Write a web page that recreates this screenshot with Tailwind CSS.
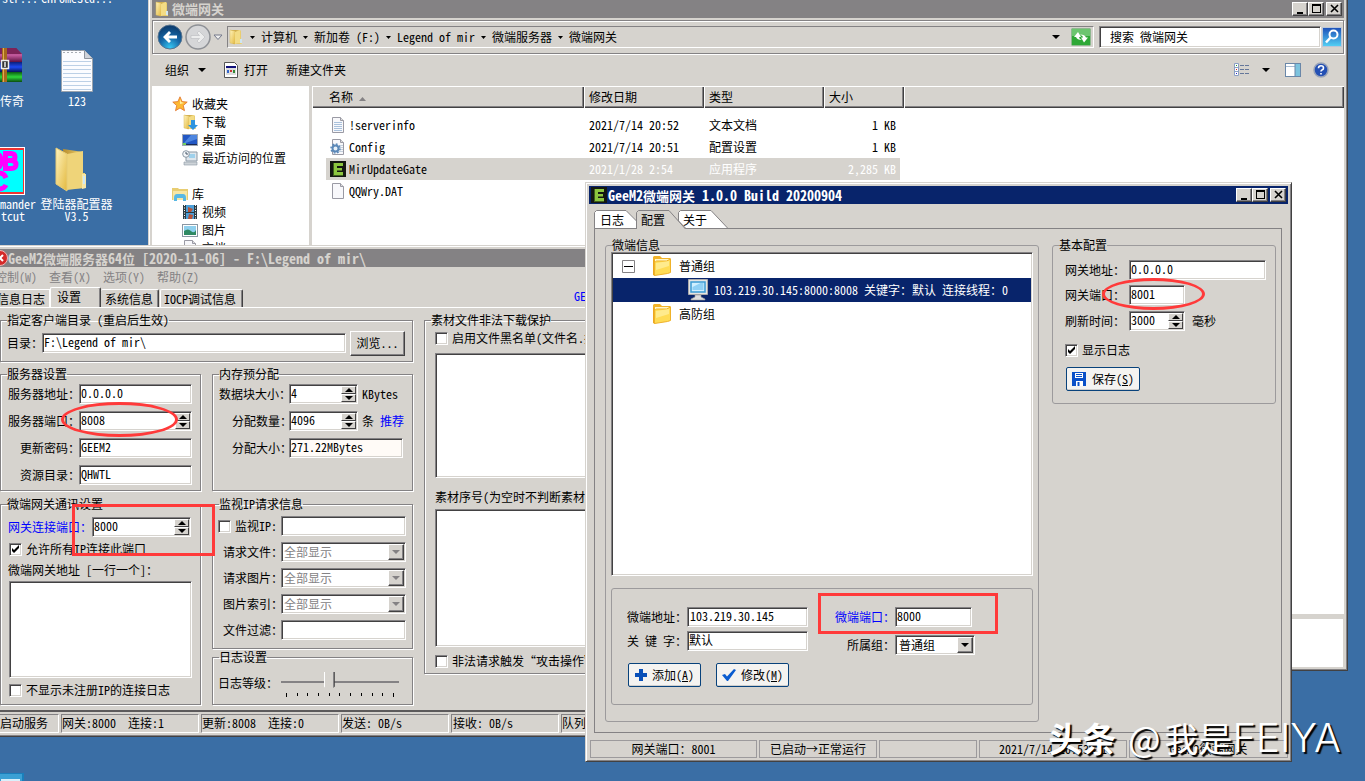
<!DOCTYPE html>
<html lang="zh-CN">
<head>
<meta charset="utf-8">
<title>微端网关</title>
<script src="https://cdn.jsdelivr.net/npm/@tailwindcss/browser@4"></script>
</head>
<body class="relative h-screen overflow-hidden bg-[#3a6ea5] text-black text-xs leading-4 whitespace-nowrap font-['Noto_Sans_Mono_CJK_SC','Noto_Sans_CJK_SC',sans-serif]">

<svg class="absolute h-0 w-0" aria-hidden="true">
  <defs>
    <linearGradient id="gold" x1="0" y1="0" x2="1" y2="1"><stop offset="0" stop-color="#fff3bd"/><stop offset="1" stop-color="#e3b93f"/></linearGradient>
    <linearGradient id="goldDark" x1="0" y1="0" x2="1" y2="0"><stop offset="0" stop-color="#b88d2c"/><stop offset="1" stop-color="#f1d87c"/></linearGradient>
    <linearGradient id="sky" x1="0" y1="0" x2="0" y2="1"><stop offset="0" stop-color="#1d4fb8"/><stop offset="1" stop-color="#54d2f5"/></linearGradient>
    <radialGradient id="orb" cx=".5" cy=".95" r=".9"><stop offset="0" stop-color="#35c8f4"/><stop offset=".5" stop-color="#1668a8"/><stop offset="1" stop-color="#0c3c6e"/></radialGradient>
    <linearGradient id="purple" x1="0" y1="0" x2="0" y2="1"><stop offset="0" stop-color="#6e1d4f"/><stop offset=".5" stop-color="#c65b9f"/><stop offset="1" stop-color="#5c1040"/></linearGradient>
    <linearGradient id="blue" x1="0" y1="0" x2="0" y2="1"><stop offset="0" stop-color="#0b1f7a"/><stop offset=".5" stop-color="#1c49f0"/><stop offset="1" stop-color="#08145a"/></linearGradient>
    <linearGradient id="green" x1="0" y1="0" x2="0" y2="1"><stop offset="0" stop-color="#0a5c12"/><stop offset=".5" stop-color="#2fd63a"/><stop offset="1" stop-color="#0a4c10"/></linearGradient>
    <symbol id="folder-open" viewBox="0 0 16 16">
      <path d="M3 1h9l1 1v8h1v5H5z" fill="url(#goldDark)"/>
      <path d="M2 1l5 1v13l-5-1z" fill="url(#gold)" stroke="#d8b85a" stroke-width=".5"/>
      <path d="M7 3l5-2v13l-5 1z" fill="#f3dc85"/>
      <path d="M12 10h2v4h-2z" fill="#cfe6f2"/>
    </symbol>
    <symbol id="page" viewBox="0 0 16 16">
      <path d="M2.500 .5h8l3 3v12h-11z" fill="#f8f8fb" stroke="#9a9aa4"/><path d="M10.500 .5v3h3" fill="#ddd" stroke="#9a9aa4"/>
    </symbol>
    <symbol id="e-logo" viewBox="0 0 16 16">
      <rect width="16" height="16" fill="#141711"/><path d="M4 2h9v3H7v2h5v2.500H7V11h6v3H4z" fill="#8cc63f"/><path d="M3 2h1v12h9v1H3z" fill="#3f5f1c"/>
    </symbol>
    <symbol id="tree-folder" viewBox="0 0 20 22">
      <path d="M1 4V2l1-1h6l2 2h8l1 1v3H1z" fill="#f2b32a"/><path d="M3 4h14v4H3z" fill="#fff6c8"/><path d="M1 4l2 3v14l-2-1z" fill="#eda81f"/><path d="M2.500 20.500l0-13 2-1.500 10 0 4-2v13.500l-3 1z" fill="#ffdc55" stroke="#efb22a"/><path d="M4 8l13-2v5L4 15z" fill="#fff0a0" opacity=".75"/>
    </symbol>
  </defs>
</svg>

<!-- Desktop shortcuts -->
<div class="absolute left-[2px] top-[-10px] text-white">str...</div>
<div class="absolute left-[41px] top-[-10px] text-white">ChromeStd...</div>

<div class="absolute left-[-12px] top-[46px] flex w-[36px] flex-col items-end gap-[10px] text-white">
  <svg class="mr-[2px] h-[37px] w-[33px]" viewBox="0 0 33 37">
    <path d="M0 2h27l6 6v8H0z" fill="url(#purple)"/><path d="M0 2h27l6 6H0z" fill="#7d2358"/><path d="M0 16h33v10H0z" fill="url(#blue)"/><path d="M0 26h33v10H0z" fill="url(#green)"/>
    <path d="M13 2h5v34h-5z" fill="#a6691c"/><path d="M14 2h1v34h-1z" fill="#e0b050"/><path d="M12.500 14.500h7v8h-7z" fill="#333" stroke="#eee" stroke-width="1.500"/><path d="M16 16v5" stroke="#eee" stroke-width="1.500"/>
  </svg>
  <span>传奇</span>
</div>

<div class="absolute left-[50px] top-[48px] flex w-[54px] flex-col items-center text-white">
  <svg class="h-[45px] w-[34px]" viewBox="0 0 34 45">
    <path d="M1.500 2.500h23l8 8v33h-31z" fill="#fbfcff" stroke="#9aa3ad"/><path d="M24.500 2.500v8h8" fill="#cfd3da" stroke="#8d939c"/>
    <path d="M3 13.500h28M3 17.500h28M3 21.500h28M3 25.500h28M3 29.500h28M3 33.500h28M3 37.500h28M3 41.500h28" stroke="#bcd0e6"/>
    <path d="M4 2v3M8 2v3M12 2v3M16 2v3M20 2v3" stroke="#8d939c" stroke-width="1.500" stroke-dasharray="1 1"/>
  </svg>
  <span>123</span>
</div>

<div class="absolute left-[-24px] top-[147px] flex w-[60px] flex-col text-right leading-3 text-white">
  <svg class="mb-[3px] h-[48px] w-[49px]" viewBox="0 0 49 48">
    <rect width="49" height="48" fill="#fff"/><rect x="1" y="1" width="47" height="46" fill="#e33"/><rect x="2" y="3" width="45" height="42" fill="#0ff"/>
    <g fill="none" stroke="#f0f" stroke-width="5"><path d="M29.500 6v16M27 6.500h8q4 0 4 3.500t-4 3.500h-5M35 13.500q5 0 5 4t-5 4h-8"/><path d="M20 7q5 0 5 7t-5 7M30 31q-2-5-7-5M30 38q-2 4-7 4"/></g>
  </svg>
  <span>mander</span>
  <span class="mr-[11px]">tcut</span>
</div>

<div class="absolute left-[36px] top-[147px] flex w-[81px] flex-col items-center leading-3 text-white">
  <svg class="mb-[5px] mr-3 h-[46px] w-[32px]" viewBox="0 0 32 46">
    <path d="M8 2l20 3v21l2 0v15l-18 1z" fill="url(#goldDark)"/><path d="M12 7l16-3v37l-16 2z" fill="#efd479"/><path d="M1 1l11 6v37l-11-7z" fill="url(#gold)" stroke="#e6cb76"/><path d="M27 27h4v14l-4 1z" fill="#f6e7a8"/><path d="M28 29h2v8h-2z" fill="#cfe9f6"/>
  </svg>
  <span>登陆器配置器</span>
  <span>V3.5</span>
</div>

<svg class="absolute left-0 top-[773px] h-2 w-6" viewBox="0 0 24 8"><path d="M0 0h24v8H0z" fill="#1a7fbb"/><path d="M0 1h22v7H0z" fill="#3ba0d4"/><path d="M1 6h19v2H1z" fill="#d9f0fb"/></svg>

<!-- Explorer window -->
<main class="absolute left-[148px] top-[-4px] flex h-[675px] w-[1200px] flex-col border border-t-[#d6d3ce] border-l-[#d6d3ce] border-r-[#424142] border-b-[#424142] bg-[#d6d3ce] p-[3px] shadow-[inset_1px_1px_0_#fff,inset_-1px_-1px_0_#848284]">
  <header class="flex h-[18px] shrink-0 items-center bg-[#848284] pl-[2px] pr-[2px] text-[#d6d3ce]">
    <svg class="mr-[2px] h-4 w-4"><use href="#folder-open"/></svg>
    <h1 class="flex-1 text-[13px] font-bold">微端网关</h1>
    <button aria-label="最小化" class="flex h-[14px] w-4 items-center justify-center border border-t-white border-l-white border-r-[#424142] border-b-[#424142] bg-[#d6d3ce] shadow-[inset_-1px_-1px_0_#848284]"><svg class="h-[10px] w-[11px]" viewBox="0 0 11 10"><path d="M2 8h6v2H2z"/></svg></button>
    <button aria-label="最大化" class="flex h-[14px] w-4 items-center justify-center border border-t-white border-l-white border-r-[#424142] border-b-[#424142] bg-[#d6d3ce] shadow-[inset_-1px_-1px_0_#848284]"><svg class="h-[10px] w-[11px]" viewBox="0 0 11 10"><path d="M1 0h9v9H1zM2 2v6h7V2z" fill-rule="evenodd"/></svg></button>
    <button aria-label="关闭" class="ml-[2px] flex h-[14px] w-4 items-center justify-center border border-t-white border-l-white border-r-[#424142] border-b-[#424142] bg-[#d6d3ce] shadow-[inset_-1px_-1px_0_#848284]"><svg class="h-[10px] w-[11px]" viewBox="0 0 11 10"><path d="M2 1l7 7M9 1L2 8" stroke="#000" stroke-width="1.600"/></svg></button>
  </header>

  <nav class="mt-[2px] flex h-[34px] shrink-0 items-center border border-[#848284] pl-1 shadow-[inset_1px_1px_0_#fff,1px_1px_0_#fff]">
    <button aria-label="后退" class="h-[26px] w-[26px]"><svg viewBox="0 0 26 26"><circle cx="13" cy="13" r="12" fill="url(#orb)" stroke="#57748f"/><path d="M6 13l6-6 2 2-2.500 2.500H20v3h-8.500L14 17l-2 2z" fill="#fff"/></svg></button>
    <button aria-label="前进" class="ml-[2px] h-[26px] w-[26px]"><svg viewBox="0 0 26 26"><circle cx="13" cy="13" r="12" fill="#d5d6d8" stroke="#8e9196" stroke-width="1.500"/><path d="M20 13l-6-6-2 2 2.500 2.500H6v3h8.500L12 17l2 2z" fill="#eceded" stroke="#b9bbbd" stroke-width=".6"/></svg></button>
    <button aria-label="最近页面" class="ml-[2px] h-[7px] w-[10px]"><svg viewBox="0 0 10 7"><path d="M1 1h8L5 5.500z" fill="#eee" stroke="#74798a"/></svg></button>
    <div class="ml-1 flex h-[22px] flex-1 items-center border border-t-[#848284] border-l-[#848284] border-r-white border-b-white pr-[2px]">
      <svg class="h-4 w-4"><use href="#folder-open"/></svg>
      <svg class="ml-[6px] h-[3px] w-[5px]" viewBox="0 0 5 3"><path d="M0 0h5L2.500 3z"/></svg>
      <a href="#" class="ml-[6px]">计算机</a>
      <svg class="mx-[6px] h-[3px] w-[5px]" viewBox="0 0 5 3"><path d="M0 0h5L2.500 3z"/></svg>
      <a href="#">新加卷 (F:)</a>
      <svg class="mx-[6px] h-[3px] w-[5px]" viewBox="0 0 5 3"><path d="M0 0h5L2.500 3z"/></svg>
      <a href="#">Legend of mir</a>
      <svg class="mx-[6px] h-[3px] w-[5px]" viewBox="0 0 5 3"><path d="M0 0h5L2.500 3z"/></svg>
      <a href="#">微端服务器</a>
      <svg class="mx-[6px] h-[3px] w-[5px]" viewBox="0 0 5 3"><path d="M0 0h5L2.500 3z"/></svg>
      <a href="#" class="flex-1">微端网关</a>
      <svg class="mr-[11px] h-1 w-2" viewBox="0 0 8 4"><path d="M0 0h8L4 4z"/></svg>
      <button aria-label="刷新" class="h-[18px] w-5"><svg viewBox="0 0 20 18"><rect x=".5" y=".5" width="19" height="17" rx="1" fill="#2fa836" stroke="#8fb890"/><path d="M1 1h18v7H1z" fill="#6cc56f"/><path d="M3 9l4-5 3 5H8q0 2 3 3-5 0-6-3zM17 9.500l-4 5-3-5h2q0-2-3-3 5 0 6 3z" fill="#fff"/></svg></button>
    </div>
    <input aria-label="搜索" value="搜索 微端网关" class="ml-[5px] h-[22px] w-[222px] border border-t-[#848284] border-l-[#848284] border-r-white border-b-white bg-white pb-px pl-[10px] shadow-[inset_1px_1px_0_#424142,inset_-1px_-1px_0_#d6d3ce]">
    <button aria-label="开始搜索" class="mx-px h-5 w-5"><svg viewBox="0 0 20 20"><rect x=".5" y=".5" width="19" height="19" fill="url(#sky)" stroke="#b9c6d8"/><circle cx="11.500" cy="7.500" r="4" fill="none" stroke="#fff" stroke-width="2"/><path d="M8.500 10.500l-4.500 5" stroke="#fff" stroke-width="2.500"/></svg></button>
  </nav>

  <div class="flex h-8 shrink-0 items-center pl-[13px] pr-[15px]">
    <button>组织</button>
    <svg class="ml-[9px] h-1 w-2" viewBox="0 0 8 4"><path d="M0 0h8L4 4z"/></svg>
    <button class="ml-[18px] flex items-center gap-[6px]"><svg class="h-4 w-[14px]" viewBox="0 0 14 16"><path d="M.5.5h10l3 3v12H.5z" fill="#fff" stroke="#555"/><path d="M2 4h10v9H2z" fill="#ddd"/><path d="M2 4h10v2H2z" fill="#10107a"/><path d="M3 8h2v3H3z" fill="#36c"/><path d="M6 8h2v2H6z" fill="#c33"/><path d="M9 8h2v3H9z" fill="#383"/></svg>打开</button>
    <button class="ml-[18px]">新建文件夹</button>
    <div class="ml-auto flex items-center">
      <svg class="h-[14px] w-[16px]" viewBox="0 0 16 14"><path d="M.5.5h4v12h-4zM1 4.500h3M1 8.500h3" fill="#fff" stroke="#8ba0c4"/><path d="M2 2h1v1H2z" fill="#292"/><path d="M2 6h1v1H2z" fill="#c22"/><path d="M2 10h1v1H2z" fill="#22c"/><path d="M6 2.500h4M11 2.500h4M6 6.500h4M11 6.500h4M6 10.500h4M11 10.500h4" stroke="#65779a"/></svg>
      <svg class="ml-[12px] h-1 w-2" viewBox="0 0 8 4"><path d="M0 0h8L4 4z"/></svg>
      <svg class="ml-[15px] h-[14px] w-4" viewBox="0 0 16 14"><rect x=".5" y=".5" width="15" height="13" fill="#fff" stroke="#6a87a8"/><path d="M1 3.500h9" stroke="#a9bdd3"/><path d="M10 1h5v12h-5z" fill="#7cc3de"/><path d="M10 1v12" stroke="#6a87a8"/></svg>
      <svg class="ml-[12px] h-4 w-4" viewBox="0 0 16 16"><circle cx="8" cy="8" r="7" fill="#2450b4" stroke="#9aa4b8" stroke-width="1.500"/><path d="M5.500 6.200q0-2.500 2.500-2.500t2.500 2.200q0 1.400-1.500 2-1 .5-1 1.600M8 10.900v1.600" fill="none" stroke="#fff" stroke-width="1.600"/></svg>
    </div>
  </div>

  <div class="flex h-[528px] shrink-0 bg-white">
    <aside class="flex w-[157px] shrink-0 flex-col pt-[9px]">
      <a href="#" class="flex h-[18px] items-center gap-1 pl-5"><svg class="h-4 w-4" viewBox="0 0 16 16"><path d="M8 .8l2.100 4.800 5.100.5-3.900 3.400 1.200 5.200L8 12l-4.500 2.700 1.200-5.200L.8 6.100l5.100-.5z" fill="#fdb933" stroke="#e0702a" stroke-width=".8"/><path d="M8 3l1 3 3 1-4 1z" fill="#fff2a8"/></svg>收藏夹</a>
      <a href="#" class="flex h-[18px] items-center gap-1 pl-[30px]"><svg class="h-4 w-4" viewBox="0 0 16 16"><use href="#folder-open"/><path d="M9 6h4v5h3l-5 5-5-5h3z" fill="#2d94e0"/></svg>下载</a>
      <a href="#" class="flex h-[18px] items-center gap-1 pl-[30px]"><svg class="h-4 w-4" viewBox="0 0 16 16"><rect y="2" width="16" height="12" fill="#9fa8b5"/><path d="M1 3h14v9H1z" fill="#2358c4"/><path d="M1 12L9 3h6v4z" fill="#4e86e0"/><path d="M1 12h14v1H1z" fill="#1a2a55"/><path d="M1 11h3v2H1z" fill="#6fcf5e"/></svg>桌面</a>
      <a href="#" class="flex h-[18px] items-center gap-1 pl-[30px]"><svg class="h-4 w-4" viewBox="0 0 16 16"><path d="M4 2h11v9H4z" fill="#dfe6ec" stroke="#8c99a5"/><path d="M7 4h6v4H7z" fill="#9fd1ec"/><path d="M2 12h13v3H2z" fill="#cdd3d8" stroke="#8c99a5" stroke-width=".6"/><circle cx="4" cy="4" r="3.300" fill="#f4f7fa" stroke="#8c99a5"/><path d="M4 2v2h2" fill="none" stroke="#456"/></svg>最近访问的位置</a>
      <a href="#" class="mt-[18px] flex h-[18px] items-center gap-1 pl-5"><svg class="h-4 w-4" viewBox="0 0 16 16"><path d="M0 2h6l1 1h9v11H0z" fill="#e8cd72"/><path d="M1 5h14v9H1z" fill="#f7e6a5"/><path d="M2 15v-3q0-4 3-4h6q3 0 3 4v3h-3v-3H5v3z" fill="#58b8e4"/></svg>库</a>
      <a href="#" class="flex h-[18px] items-center gap-1 pl-[30px]"><svg class="h-4 w-4" viewBox="0 0 16 16"><path d="M1 1h14v14H1z" fill="#2b3a42"/><path d="M4 1h8v7H4z" fill="#4c9fd8"/><path d="M4 9h8v6H4z" fill="#4c9fd8"/><path d="M6 3l5 2-2 3-3 0zM7 10l4 1-1 4H6z" fill="#b5533a"/><path d="M2.500 1v14M13.500 1v14" stroke="#fff" stroke-dasharray="1 1.500"/></svg>视频</a>
      <a href="#" class="flex h-[18px] items-center gap-1 pl-[30px]"><svg class="h-4 w-4" viewBox="0 0 16 16"><rect x=".5" y="2.500" width="15" height="12" fill="#fff" stroke="#8a97a3"/><path d="M2 4h12v9H2z" fill="#8fd0ee"/><path d="M2 9q4-3 7 0t5-1v5H2z" fill="#2f8a63"/></svg>图片</a>
      <a href="#" class="flex h-[18px] items-center gap-1 pl-[30px]"><svg class="h-4 w-4"><use href="#page"/></svg>文档</a>
    </aside>
    <div class="w-[3px] shrink-0 bg-[#d6d3ce]"></div>
    <div class="flex-1">
      <table class="w-full table-fixed border-collapse text-left">
        <colgroup><col class="w-[272px]"><col class="w-[120px]"><col class="w-[120px]"><col class="w-20"><col></colgroup>
        <thead>
          <tr class="h-[22px] bg-[#d6d3ce]">
            <th class="pl-[17px] font-normal shadow-[inset_1px_1px_0_#fff,inset_-1px_-1px_0_#424142,inset_-2px_-2px_0_#848284]">名称 <svg class="inline h-1 w-[7px] align-middle" viewBox="0 0 7 4"><path d="M0 4h7L3.500 0z" fill="#848284"/></svg></th>
            <th class="pl-[5px] font-normal shadow-[inset_1px_1px_0_#fff,inset_-1px_-1px_0_#424142,inset_-2px_-2px_0_#848284]">修改日期</th>
            <th class="pl-[5px] font-normal shadow-[inset_1px_1px_0_#fff,inset_-1px_-1px_0_#424142,inset_-2px_-2px_0_#848284]">类型</th>
            <th class="pl-[5px] font-normal shadow-[inset_1px_1px_0_#fff,inset_-1px_-1px_0_#424142,inset_-2px_-2px_0_#848284]">大小</th>
            <th class="shadow-[inset_1px_1px_0_#fff,inset_-1px_-1px_0_#424142,inset_-2px_-2px_0_#848284]"></th>
          </tr>
        </thead>
        <tbody class="before:block before:h-[6px]">
          <tr class="h-[22px]">
            <td><div class="ml-[14px] flex h-[22px] items-center gap-[3px] pl-1"><svg class="h-4 w-4" viewBox="0 0 16 16"><use href="#page"/><path d="M4 5.500h8M4 7.500h8M4 9.500h8M4 11.500h8M4 13.500h8" stroke="#a9c1dc"/></svg>!serverinfo</div></td>
            <td class="pl-[5px]">2021/7/14 20:52</td><td class="pl-[5px]">文本文档</td><td><div class="mr-1 pr-1 text-right">1 KB</div></td><td></td>
          </tr>
          <tr class="h-[22px]">
            <td><div class="ml-[14px] flex h-[22px] items-center gap-[3px] pl-1"><svg class="h-4 w-4" viewBox="0 0 16 16"><use href="#page"/><path d="M9 6.500h4M9 8.500h4M9 10.500h4M9 12.500h4" stroke="#c3cfdc"/><circle cx="5.500" cy="9.500" r="3" fill="#e8f0f8" stroke="#5b88b8" stroke-width="2"/><circle cx="5.500" cy="9.500" r="4.500" fill="none" stroke="#5b88b8" stroke-width="1.500" stroke-dasharray="1.800 1.700"/></svg>Config</div></td>
            <td class="pl-[5px]">2021/7/14 20:51</td><td class="pl-[5px]">配置设置</td><td><div class="mr-1 pr-1 text-right">1 KB</div></td><td></td>
          </tr>
          <tr class="h-[22px]">
            <td><div class="ml-[14px] flex h-[22px] items-center gap-[3px] bg-[#d6d3ce] pl-1"><svg class="h-4 w-4"><use href="#e-logo"/></svg>MirUpdateGate</div></td>
            <td class="bg-[#d6d3ce] pl-[5px] text-white">2021/1/28 2:54</td><td class="bg-[#d6d3ce] pl-[5px] text-white">应用程序</td><td><div class="mr-1 bg-[#d6d3ce] py-[3px] pr-1 text-right text-white">2,285 KB</div></td><td></td>
          </tr>
          <tr class="h-[22px]">
            <td><div class="ml-[14px] flex h-[22px] items-center gap-[3px] pl-1"><svg class="h-4 w-4"><use href="#page"/></svg>QQWry.DAT</div></td>
            <td></td><td></td><td></td><td></td>
          </tr>
        </tbody>
      </table>
    </div>
  </div>
  <div class="mt-[5px] flex-1 bg-white mr-px"></div>
</main>

<!-- Server settings window -->
<section class="absolute left-[-12px] top-[245px] flex h-[492px] w-[800px] flex-col border border-t-[#d6d3ce] border-l-[#d6d3ce] border-r-[#424142] border-b-[#424142] bg-[#d6d3ce] p-[3px] shadow-[inset_1px_1px_0_#fff,inset_-1px_-1px_0_#848284]">
  <header class="flex h-[18px] shrink-0 items-center bg-[#848284] text-[13px] font-bold text-[#d6d3ce]">
    <svg class="h-4 w-4 shrink-0" viewBox="0 0 16 16"><circle cx="8" cy="8" r="7.500" fill="#d42a2a" stroke="#f1b4b4"/><path d="M5 5l6 6M11 5l-6 6" stroke="#fff" stroke-width="2"/></svg>
    <h2><span class="text-sm">GeeM2</span>微端服务器<span class="text-sm">64</span>位<span class="text-sm"> [2020-11-06] - F:\Legend of mir\</span></h2>
  </header>
  <div class="flex h-5 shrink-0 items-center gap-3 pl-[3px] text-[#848284]">
    <button>控制(W)</button><button>查看(X)</button><button>选项(Y)</button><button>帮助(Z)</button>
  </div>
  <div class="flex h-5 shrink-0 items-end">
    <button class="h-[18px] w-[58px] border-t border-r border-white pr-1 text-right">信息日志</button>
    <button class="h-5 w-[51px] rounded-t-xs border-t border-l border-r border-t-white border-l-white border-r-[#424142] pb-[2px] pl-[6px] text-left shadow-[inset_-1px_0_0_#848284]">设置</button>
    <button class="h-[18px] w-[58px] rounded-t-xs border-t border-r border-t-white border-r-[#424142] pl-1 text-left shadow-[inset_-1px_0_0_#848284]">系统信息</button>
    <button class="ml-[1px] h-[18px] w-[83px] rounded-t-xs border-t border-l border-r border-t-white border-l-white border-r-[#424142] pl-[3px] text-left shadow-[inset_-1px_0_0_#848284]">IOCP调试信息</button>
    <a href="#" class="ml-[331px] mb-[3px] text-[#0000ff]">GEEM2</a>
  </div>

  <div class="flex shrink-0 gap-[11px] border-t border-white pl-2 pt-1">
    <div class="flex w-[413px] flex-col">
      <fieldset class="h-[50px] border border-[#848284] pl-[6px] shadow-[inset_1px_1px_0_#fff,1px_1px_0_#fff]">
        <legend class="h-4">指定客户端目录 (重启后生效)</legend>
        <div class="flex h-[27px] items-center pt-[3px]">
          <label for="dir" class="w-[35px]">目录：</label>
          <input id="dir" value="F:\Legend of mir\" class="h-5 w-[304px] border border-t-[#848284] border-l-[#848284] border-r-white border-b-white bg-white px-px pb-1 shadow-[inset_1px_1px_0_#424142,inset_-1px_-1px_0_#d6d3ce]">
          <button class="ml-1 h-[25px] w-[55px] border border-t-white border-l-white border-r-[#424142] border-b-[#424142] shadow-[inset_-1px_-1px_0_#848284]">浏览...</button>
        </div>
      </fieldset>

      <div class="mt-1 flex gap-[11px]">
        <fieldset class="h-[125px] w-[201px] border border-[#848284] pl-[7px] shadow-[inset_1px_1px_0_#fff,1px_1px_0_#fff]">
          <legend class="-ml-px h-4">服务器设置</legend>
          <div class="flex flex-col gap-[7px] pt-[2px]">
            <div class="flex items-center"><label for="host" class="w-[71px]">服务器地址：</label><input id="host" value="0.0.0.0" class="h-5 w-[113px] border border-t-[#848284] border-l-[#848284] border-r-white border-b-white bg-white px-px pb-1 shadow-[inset_1px_1px_0_#424142,inset_-1px_-1px_0_#d6d3ce]"></div>
            <div class="flex items-center"><label for="port" class="w-[71px]">服务器端口：</label>
              <div class="flex h-5 w-[113px] items-center border border-t-[#848284] border-l-[#848284] border-r-white border-b-white bg-white p-px shadow-[inset_1px_1px_0_#424142,inset_-1px_-1px_0_#d6d3ce]"><input id="port" value="8008" class="h-4 w-0 flex-1 pb-[3px]">
                <span class="flex w-[15px] flex-col"><button aria-label="增加" class="flex h-2 items-center justify-center border border-t-white border-l-white border-r-[#424142] border-b-[#424142] bg-[#d6d3ce]"><svg class="h-1 w-2" viewBox="0 0 8 4"><path d="M0 4h8L4 0z"/></svg></button><button aria-label="减少" class="flex h-2 items-center justify-center border border-t-white border-l-white border-r-[#424142] border-b-[#424142] bg-[#d6d3ce]"><svg class="h-1 w-2" viewBox="0 0 8 4"><path d="M0 0h8L4 4z"/></svg></button></span></div></div>
            <div class="flex items-center"><label for="pass" class="w-[71px] pl-3">更新密码：</label><input id="pass" value="GEEM2" class="h-5 w-[113px] border border-t-[#848284] border-l-[#848284] border-r-white border-b-white bg-white px-px pb-1 shadow-[inset_1px_1px_0_#424142,inset_-1px_-1px_0_#d6d3ce]"></div>
            <div class="flex items-center"><label for="res" class="w-[71px] pl-3">资源目录：</label><input id="res" value="QHWTL" class="h-5 w-[113px] border border-t-[#848284] border-l-[#848284] border-r-white border-b-white bg-white px-px pb-1 shadow-[inset_1px_1px_0_#424142,inset_-1px_-1px_0_#d6d3ce]"></div>
          </div>
        </fieldset>
        <fieldset class="h-[125px] w-[201px] border border-[#848284] pl-[6px] shadow-[inset_1px_1px_0_#fff,1px_1px_0_#fff]">
          <legend class="h-4">内存预分配</legend>
          <div class="flex flex-col gap-[7px] pt-[2px]">
            <div class="flex items-center"><label for="block" class="w-[70px]">数据块大小：</label>
              <div class="flex h-5 w-[69px] items-center border border-t-[#848284] border-l-[#848284] border-r-white border-b-white bg-white p-px shadow-[inset_1px_1px_0_#424142,inset_-1px_-1px_0_#d6d3ce]"><input id="block" value="4" class="h-4 w-0 flex-1 pb-[3px]">
                <span class="flex w-[15px] flex-col"><button aria-label="增加" class="flex h-2 items-center justify-center border border-t-white border-l-white border-r-[#424142] border-b-[#424142] bg-[#d6d3ce]"><svg class="h-1 w-2" viewBox="0 0 8 4"><path d="M0 4h8L4 0z"/></svg></button><button aria-label="减少" class="flex h-2 items-center justify-center border border-t-white border-l-white border-r-[#424142] border-b-[#424142] bg-[#d6d3ce]"><svg class="h-1 w-2" viewBox="0 0 8 4"><path d="M0 0h8L4 4z"/></svg></button></span></div><span class="ml-[4px]">KBytes</span></div>
            <div class="flex items-center"><label for="count" class="w-[70px] pl-[13px]">分配数量：</label>
              <div class="flex h-5 w-[69px] items-center border border-t-[#848284] border-l-[#848284] border-r-white border-b-white bg-white p-px shadow-[inset_1px_1px_0_#424142,inset_-1px_-1px_0_#d6d3ce]"><input id="count" value="4096" class="h-4 w-0 flex-1 pb-[3px]">
                <span class="flex w-[15px] flex-col"><button aria-label="增加" class="flex h-2 items-center justify-center border border-t-white border-l-white border-r-[#424142] border-b-[#424142] bg-[#d6d3ce]"><svg class="h-1 w-2" viewBox="0 0 8 4"><path d="M0 4h8L4 0z"/></svg></button><button aria-label="减少" class="flex h-2 items-center justify-center border border-t-white border-l-white border-r-[#424142] border-b-[#424142] bg-[#d6d3ce]"><svg class="h-1 w-2" viewBox="0 0 8 4"><path d="M0 0h8L4 4z"/></svg></button></span></div><span class="ml-[4px]">条</span><a href="#" class="ml-[6px] text-[#0000ff]">推荐</a></div>
            <div class="flex items-center"><label for="total" class="w-[70px] pl-[13px]">分配大小：</label><input id="total" readonly value="271.22MBytes" class="h-5 w-[114px] border border-t-[#848284] border-l-[#848284] border-r-white border-b-white bg-[#fffbf7] px-px pb-1 shadow-[inset_1px_1px_0_#424142,inset_-1px_-1px_0_#d6d3ce]"></div>
          </div>
        </fieldset>
      </div>

      <div class="mt-[5px] flex gap-[11px]">
        <fieldset class="h-[209px] w-[201px] border border-[#848284] pl-[7px] shadow-[inset_1px_1px_0_#fff,1px_1px_0_#fff]">
          <legend class="-ml-px h-4">微端网关通讯设置</legend>
          <div class="flex flex-col pt-[5px]">
            <div class="flex items-center"><label for="gport" class="w-[84px] text-[#0000ff]">网关连接端口：</label>
              <div class="flex h-5 w-[99px] items-center border border-t-[#848284] border-l-[#848284] border-r-white border-b-white bg-white p-px shadow-[inset_1px_1px_0_#424142,inset_-1px_-1px_0_#d6d3ce]"><input id="gport" value="8000" class="h-4 w-0 flex-1 pb-[3px]">
                <span class="flex w-[15px] flex-col"><button aria-label="增加" class="flex h-2 items-center justify-center border border-t-white border-l-white border-r-[#424142] border-b-[#424142] bg-[#d6d3ce]"><svg class="h-1 w-2" viewBox="0 0 8 4"><path d="M0 4h8L4 0z"/></svg></button><button aria-label="减少" class="flex h-2 items-center justify-center border border-t-white border-l-white border-r-[#424142] border-b-[#424142] bg-[#d6d3ce]"><svg class="h-1 w-2" viewBox="0 0 8 4"><path d="M0 0h8L4 4z"/></svg></button></span></div></div>
            <label class="mt-1 flex items-center gap-1 pl-px"><span class="grid"><input type="checkbox" checked class="peer col-start-1 row-start-1 h-[13px] w-[13px] appearance-none border border-t-[#848284] border-l-[#848284] border-r-white border-b-white bg-white shadow-[inset_1px_1px_0_#424142,inset_-1px_-1px_0_#d6d3ce]"><svg class="pointer-events-none invisible col-start-1 row-start-1 h-[13px] w-[13px] peer-checked:visible" viewBox="0 0 13 13"><path d="M3 5v3l2 2 5-5V2L5 7z"/></svg></span>允许所有IP连接此端口</label>
            <label for="list" class="mt-[5px]">微端网关地址 [一行一个]：</label>
            <textarea id="list" class="mt-[3px] ml-px h-[97px] w-[183px] resize-none border border-t-[#848284] border-l-[#848284] border-r-white border-b-white bg-white shadow-[inset_1px_1px_0_#424142,inset_-1px_-1px_0_#d6d3ce]"></textarea>
            <label class="mt-1 flex items-center gap-1 pl-px"><input type="checkbox" class="h-[13px] w-[13px] appearance-none border border-t-[#848284] border-l-[#848284] border-r-white border-b-white bg-white shadow-[inset_1px_1px_0_#424142,inset_-1px_-1px_0_#d6d3ce]">不显示未注册IP的连接日志</label>
          </div>
        </fieldset>

        <div class="flex w-[201px] flex-col">
          <fieldset class="h-[153px] border border-[#848284] pl-[5px] shadow-[inset_1px_1px_0_#fff,1px_1px_0_#fff]">
            <legend class="ml-px h-4">监视IP请求信息</legend>
            <div class="flex flex-col gap-[6px] pt-1">
              <div class="flex items-center"><label class="flex w-[63px] items-center gap-1"><input type="checkbox" class="h-[13px] w-[13px] appearance-none border border-t-[#848284] border-l-[#848284] border-r-white border-b-white bg-white shadow-[inset_1px_1px_0_#424142,inset_-1px_-1px_0_#d6d3ce]">监视IP:</label><input aria-label="监视IP" class="h-5 w-[125px] border border-t-[#848284] border-l-[#848284] border-r-white border-b-white bg-white shadow-[inset_1px_1px_0_#424142,inset_-1px_-1px_0_#d6d3ce]"></div>
              <div class="flex items-center"><label for="f1" class="w-[63px] pl-[5px]">请求文件：</label><span class="relative"><select id="f1" disabled class="block h-5 w-[125px] appearance-none border border-t-[#848284] border-l-[#848284] border-r-white border-b-white bg-white pl-[2px] text-[#848284] opacity-100 shadow-[inset_1px_1px_0_#424142,inset_-1px_-1px_0_#d6d3ce]"><option>全部显示</option></select><span class="pointer-events-none absolute top-[2px] right-[2px] flex h-4 w-4 items-center justify-center border border-t-white border-l-white border-r-[#424142] border-b-[#424142] bg-[#d6d3ce] shadow-[inset_-1px_-1px_0_#848284]"><svg class="h-1 w-2" viewBox="0 0 8 4"><path d="M0 0h8L4 4z" fill="#848284"/></svg></span></span></div>
              <div class="flex items-center"><label for="f2" class="w-[63px] pl-[5px]">请求图片：</label><span class="relative"><select id="f2" disabled class="block h-5 w-[125px] appearance-none border border-t-[#848284] border-l-[#848284] border-r-white border-b-white bg-white pl-[2px] text-[#848284] opacity-100 shadow-[inset_1px_1px_0_#424142,inset_-1px_-1px_0_#d6d3ce]"><option>全部显示</option></select><span class="pointer-events-none absolute top-[2px] right-[2px] flex h-4 w-4 items-center justify-center border border-t-white border-l-white border-r-[#424142] border-b-[#424142] bg-[#d6d3ce] shadow-[inset_-1px_-1px_0_#848284]"><svg class="h-1 w-2" viewBox="0 0 8 4"><path d="M0 0h8L4 4z" fill="#848284"/></svg></span></span></div>
              <div class="flex items-center"><label for="f3" class="w-[63px] pl-[5px]">图片索引：</label><span class="relative"><select id="f3" disabled class="block h-5 w-[125px] appearance-none border border-t-[#848284] border-l-[#848284] border-r-white border-b-white bg-white pl-[2px] text-[#848284] opacity-100 shadow-[inset_1px_1px_0_#424142,inset_-1px_-1px_0_#d6d3ce]"><option>全部显示</option></select><span class="pointer-events-none absolute top-[2px] right-[2px] flex h-4 w-4 items-center justify-center border border-t-white border-l-white border-r-[#424142] border-b-[#424142] bg-[#d6d3ce] shadow-[inset_-1px_-1px_0_#848284]"><svg class="h-1 w-2" viewBox="0 0 8 4"><path d="M0 0h8L4 4z" fill="#848284"/></svg></span></span></div>
              <div class="flex items-center"><label for="f4" class="w-[63px] pl-[5px]">文件过滤：</label><input id="f4" class="h-5 w-[125px] border border-t-[#848284] border-l-[#848284] border-r-white border-b-white bg-white shadow-[inset_1px_1px_0_#424142,inset_-1px_-1px_0_#d6d3ce]"></div>
            </div>
          </fieldset>
          <fieldset class="h-[56px] border border-[#848284] pl-[5px] shadow-[inset_1px_1px_0_#fff,1px_1px_0_#fff]">
            <legend class="ml-px h-4">日志设置</legend>
            <div class="flex pt-[6px]">
              <label for="level" class="mt-[4px] w-[63px]">日志等级：</label>
              <div class="w-[118px]">
                <input id="level" type="range" min="0" max="10" value="4" class="block h-[21px] w-full appearance-none bg-[linear-gradient(#848284,#848284)] bg-[length:100%_2px] bg-center bg-no-repeat [&::-webkit-slider-thumb]:h-[20px] [&::-webkit-slider-thumb]:w-[11px] [&::-webkit-slider-thumb]:appearance-none [&::-webkit-slider-thumb]:bg-[linear-gradient(90deg,#fff_1px,#d6d3ce_1px,#d6d3ce_9px,#848284_9px,#848284_10px,#424142_10px)] [&::-webkit-slider-thumb]:[clip-path:polygon(0_0,100%_0,100%_75%,50%_100%,0_75%)]">
                <div class="flex justify-between pr-[5px] pl-[5px] pt-px"><i class="h-1 w-px bg-black"></i><i class="h-[3px] w-px bg-black"></i><i class="h-[3px] w-px bg-black"></i><i class="h-[3px] w-px bg-black"></i><i class="h-[3px] w-px bg-black"></i><i class="h-[3px] w-px bg-black"></i><i class="h-[3px] w-px bg-black"></i><i class="h-[3px] w-px bg-black"></i><i class="h-[3px] w-px bg-black"></i><i class="h-[3px] w-px bg-black"></i><i class="h-1 w-px bg-black"></i></div>
              </div>
            </div>
          </fieldset>
        </div>
      </div>
    </div>

    <fieldset class="h-[362px] w-[340px] border border-[#848284] pl-[10px] shadow-[inset_1px_1px_0_#fff,1px_1px_0_#fff]">
      <legend class="-ml-1 h-4">素材文件非法下载保护</legend>
      <div class="flex flex-col pt-[2px]">
        <label class="flex items-center gap-1"><input type="checkbox" class="h-[13px] w-[13px] appearance-none border border-t-[#848284] border-l-[#848284] border-r-white border-b-white bg-white shadow-[inset_1px_1px_0_#424142,inset_-1px_-1px_0_#d6d3ce]">启用文件黑名单(文件名.扩展名)</label>
        <textarea aria-label="文件黑名单" class="mt-[7px] h-[125px] w-[300px] resize-none border border-t-[#848284] border-l-[#848284] border-r-white border-b-white bg-white shadow-[inset_1px_1px_0_#424142,inset_-1px_-1px_0_#d6d3ce]"></textarea>
        <label for="seq" class="mt-[11px]">素材序号(为空时不判断素材序号)</label>
        <textarea id="seq" class="mt-[4px] h-[138px] w-[300px] resize-none border border-t-[#848284] border-l-[#848284] border-r-white border-b-white bg-white shadow-[inset_1px_1px_0_#424142,inset_-1px_-1px_0_#d6d3ce]"></textarea>
        <label class="mt-[6px] flex items-center gap-1"><input type="checkbox" class="h-[13px] w-[13px] appearance-none border border-t-[#848284] border-l-[#848284] border-r-white border-b-white bg-white shadow-[inset_1px_1px_0_#424142,inset_-1px_-1px_0_#d6d3ce]">非法请求触发“攻击操作”</label>
      </div>
    </fieldset>
  </div>

  <footer class="mt-auto flex gap-[2px] border-t-2 border-[#5c5a5b] pt-[2px]">
    <div class="h-[19px] w-[67px] border border-t-[#848284] border-l-[#848284] border-r-white border-b-white pl-[7px]">启动服务</div>
    <div class="h-[19px] w-[138px] border border-t-[#848284] border-l-[#848284] border-r-white border-b-white">网关:8000<span class="ml-3">连接:1</span></div>
    <div class="h-[19px] w-[138px] border border-t-[#848284] border-l-[#848284] border-r-white border-b-white">更新:8008<span class="ml-3">连接:0</span></div>
    <div class="h-[19px] w-[108px] border border-t-[#848284] border-l-[#848284] border-r-white border-b-white">发送: 0B/s</div>
    <div class="h-[19px] w-[108px] border border-t-[#848284] border-l-[#848284] border-r-white border-b-white pl-px">接收: 0B/s</div>
    <div class="h-[19px] flex-1 border border-t-[#848284] border-l-[#848284] border-r-white border-b-white">队列</div>
  </footer>
</section>

<!-- Gateway window -->
<section class="absolute left-[585px] top-[182px] flex h-[580px] w-[707px] flex-col border border-t-[#d6d3ce] border-l-[#d6d3ce] border-r-[#424142] border-b-[#424142] bg-[#d6d3ce] p-[3px] shadow-[inset_1px_1px_0_#fff,inset_-1px_-1px_0_#848284]">
  <header class="flex h-[18px] shrink-0 items-center bg-[#08246b] pl-[2px] pr-[2px] text-[13px] font-bold text-white">
    <svg class="h-4 w-4"><use href="#e-logo"/></svg>
    <h2 class="flex-1 pl-px"><span class="text-sm">GeeM2</span>微端网关<span class="text-sm"> 1.0.0 Build 20200904</span></h2>
    <button aria-label="最小化" class="flex h-[14px] w-4 items-center justify-center border border-t-white border-l-white border-r-[#424142] border-b-[#424142] bg-[#d6d3ce] shadow-[inset_-1px_-1px_0_#848284]"><svg class="h-[10px] w-[11px]" viewBox="0 0 11 10"><path d="M2 8h6v2H2z"/></svg></button>
    <button aria-label="最大化" class="flex h-[14px] w-4 items-center justify-center border border-t-white border-l-white border-r-[#424142] border-b-[#424142] bg-[#d6d3ce] shadow-[inset_-1px_-1px_0_#848284]"><svg class="h-[10px] w-[11px]" viewBox="0 0 11 10"><path d="M1 0h9v9H1zM2 2v6h7V2z" fill-rule="evenodd"/></svg></button>
    <button aria-label="关闭" class="ml-[2px] flex h-[14px] w-4 items-center justify-center border border-t-white border-l-white border-r-[#424142] border-b-[#424142] bg-[#d6d3ce] shadow-[inset_-1px_-1px_0_#848284]"><svg class="h-[10px] w-[11px]" viewBox="0 0 11 10"><path d="M2 1l7 7M9 1L2 8" stroke="#000" stroke-width="1.600"/></svg></button>
  </header>

  <div class="relative z-10 mt-[6px] ml-[5px] -mb-px flex h-[19px] w-[134px] shrink-0 items-center">
    <svg class="absolute inset-0 h-[19px] w-[134px]" viewBox="0 0 134 19">
      <path d="M.5 18.500V2.500l2-2H32L42.500 11v7.500z" fill="#fff" stroke="#848284"/>
      <path d="M84.500 11V2.500l2-2H117l17 18H92z" fill="#fff" stroke="#848284"/>
      <path d="M42.500 19V2.500l2-2H75L91.500 19z" fill="#d6d3ce"/><path d="M42.500 19V2.500l2-2H75L91.500 19" fill="none" stroke="#848284"/>
    </svg>
    <button class="relative ml-[6px]">日志</button>
    <button class="relative ml-[17px]">配置</button>
    <button class="relative ml-[18px]">关于</button>
  </div>

  <div class="ml-[5px] flex h-[505px] w-[688px] shrink-0 items-start gap-[13px] border border-[#848284] pt-[9px] pl-[10px]">
    <fieldset class="h-[484px] w-[434px] rounded-[3px] border border-[#9c9a9c] pr-[5px] pl-[5px]">
      <legend class="ml-px h-[14px] leading-[14px]">微端信息</legend>
      <ul class="h-[324px] border border-t-[#848284] border-l-[#848284] border-r-white border-b-white bg-white p-px shadow-[inset_1px_1px_0_#424142,inset_-1px_-1px_0_#d6d3ce]">
        <li class="flex h-6 items-center pl-[9px]"><svg class="h-[13px] w-[13px]" viewBox="0 0 13 13"><path d="M.5.5h12v12H.5z" fill="#fff" stroke="#848284"/><path d="M2 6.500h9" stroke="#000"/></svg><svg class="mr-[7px] ml-[17px] h-[22px] w-5"><use href="#tree-folder"/></svg>普通组</li>
        <li class="flex h-6 items-center bg-[#08246b] pl-[75px] text-white"><svg class="mr-[6px] h-[22px] w-5" viewBox="0 0 20 22"><path d="M.5 .5h19v15H.5z" fill="#e4e4e4" stroke="#aaa"/><path d="M3 3h14v10H3z" fill="#cfefff" stroke="#3a9bd4" stroke-width="1.500"/><path d="M4.500 8l8-4h3v7h-11z" fill="#8fd0f5"/><path d="M7 16h6v2l4 2v1H3v-1l4-2z" fill="#ddd" stroke="#999" stroke-width=".6"/></svg>103.219.30.145:8000:8008 关键字：默认 连接线程：0</li>
        <li class="flex h-6 items-center pl-[39px]"><svg class="mr-[7px] h-[22px] w-5"><use href="#tree-folder"/></svg>高防组</li>
      </ul>
      <div class="mt-3 flex h-[117px] rounded-[3px] border border-[#9c9a9c] pt-[18px] pl-[15px]">
        <div class="flex flex-col gap-1">
          <div class="flex items-center"><label for="addr" class="w-[60px]">微端地址：</label><input id="addr" value="103.219.30.145" class="h-5 w-[121px] border border-t-[#848284] border-l-[#848284] border-r-white border-b-white bg-white px-[2px] pb-1 shadow-[inset_1px_1px_0_#424142,inset_-1px_-1px_0_#d6d3ce]"></div>
          <div class="flex items-center"><label for="key" class="w-[60px]">关 键 字：</label><input id="key" value="默认" class="h-5 w-[121px] border border-t-[#848284] border-l-[#848284] border-r-white border-b-white bg-white px-px pb-1 shadow-[inset_1px_1px_0_#424142,inset_-1px_-1px_0_#d6d3ce]"></div>
          <div class="mt-2 flex gap-[15px] pl-px">
            <button class="flex h-6 w-[73px] items-center justify-center gap-[5px] rounded-xs border border-[#08427b] bg-[#f4f3f1] shadow-[inset_0_-1px_0_#d0cfcd]"><svg class="h-3 w-3" viewBox="0 0 12 12"><path d="M4 0h4v4h4v4H8v4H4V8H0V4h4z" fill="#0a50b8"/></svg><span>添加(<u>A</u>)</span></button>
            <button class="flex h-6 w-[73px] items-center justify-center gap-[5px] rounded-xs border border-[#08427b] bg-[#f4f3f1] shadow-[inset_0_-1px_0_#d0cfcd]"><svg class="h-3 w-[14px]" viewBox="0 0 14 12"><path d="M0 6l3-1 2 2.500L12 0l2 1-8 11H5z" fill="#0a5cd0"/></svg><span>修改(<u>M</u>)</span></button>
          </div>
        </div>
        <div class="ml-[27px] flex flex-col gap-2">
          <div class="flex items-center"><label for="mport" class="w-[60px] text-right text-[#0000ff]">微端端口：</label><input id="mport" value="8000" class="h-5 w-[77px] border border-t-[#848284] border-l-[#848284] border-r-white border-b-white bg-white px-px pb-1 shadow-[inset_1px_1px_0_#424142,inset_-1px_-1px_0_#d6d3ce]"></div>
          <div class="flex items-center"><label for="group" class="w-[60px] text-right">所属组：</label><span class="relative"><select id="group" class="block h-5 w-20 appearance-none border border-t-[#848284] border-l-[#848284] border-r-white border-b-white bg-white pl-[3px] shadow-[inset_1px_1px_0_#424142,inset_-1px_-1px_0_#d6d3ce]"><option>普通组</option><option>高防组</option></select><span class="pointer-events-none absolute top-[2px] right-[2px] flex h-4 w-4 items-center justify-center border border-t-white border-l-white border-r-[#424142] border-b-[#424142] bg-[#d6d3ce] shadow-[inset_-1px_-1px_0_#848284]"><svg class="h-1 w-2" viewBox="0 0 8 4"><path d="M0 0h8L4 4z"/></svg></span></span></div>
        </div>
      </div>
    </fieldset>

    <fieldset class="h-[166px] w-[224px] rounded-[3px] border border-[#9c9a9c] pl-3">
      <legend class="-ml-[6px] h-[14px] leading-[14px]">基本配置</legend>
      <div class="flex flex-col gap-[5px] pt-2">
        <div class="flex items-center"><label for="ghost" class="w-16">网关地址：</label><input id="ghost" value="0.0.0.0" class="h-5 w-[137px] border border-t-[#848284] border-l-[#848284] border-r-white border-b-white bg-white px-px pb-1 shadow-[inset_1px_1px_0_#424142,inset_-1px_-1px_0_#d6d3ce]"></div>
        <div class="flex items-center"><label for="gwport" class="w-16">网关端口：</label><input id="gwport" value="8001" class="h-5 w-[56px] border border-t-[#848284] border-l-[#848284] border-r-white border-b-white bg-white px-px pb-1 shadow-[inset_1px_1px_0_#424142,inset_-1px_-1px_0_#d6d3ce]"></div>
        <div class="flex items-center pt-px"><label for="refresh" class="w-16">刷新时间：</label>
          <div class="flex h-5 w-[56px] items-center border border-t-[#848284] border-l-[#848284] border-r-white border-b-white bg-white p-px shadow-[inset_1px_1px_0_#424142,inset_-1px_-1px_0_#d6d3ce]"><input id="refresh" value="3000" class="h-4 w-0 flex-1 pb-[3px]">
            <span class="flex w-[15px] flex-col"><button aria-label="增加" class="flex h-2 items-center justify-center border border-t-white border-l-white border-r-[#424142] border-b-[#424142] bg-[#d6d3ce]"><svg class="h-1 w-2" viewBox="0 0 8 4"><path d="M0 4h8L4 0z"/></svg></button><button aria-label="减少" class="flex h-2 items-center justify-center border border-t-white border-l-white border-r-[#424142] border-b-[#424142] bg-[#d6d3ce]"><svg class="h-1 w-2" viewBox="0 0 8 4"><path d="M0 0h8L4 4z"/></svg></button></span></div><span class="ml-[7px]">毫秒</span></div>
        <label class="mt-[6px] flex items-center gap-1"><span class="grid"><input type="checkbox" checked class="peer col-start-1 row-start-1 h-[13px] w-[13px] appearance-none border border-t-[#848284] border-l-[#848284] border-r-white border-b-white bg-white shadow-[inset_1px_1px_0_#424142,inset_-1px_-1px_0_#d6d3ce]"><svg class="pointer-events-none invisible col-start-1 row-start-1 h-[13px] w-[13px] peer-checked:visible" viewBox="0 0 13 13"><path d="M3 5v3l2 2 5-5V2L5 7z"/></svg></span>显示日志</label>
        <button class="mt-1 ml-px flex h-6 w-[74px] items-center justify-center gap-[6px] rounded-xs border border-[#08427b] bg-[#f4f3f1] shadow-[inset_0_-1px_0_#d0cfcd]"><svg class="h-[14px] w-[14px]" viewBox="0 0 14 14"><path d="M0 0h14v14H0z" fill="#0a50c8"/><path d="M3 1h8v5H3z" fill="#fff"/><path d="M4 2.500h6M4 4.500h6" stroke="#0a50c8"/><path d="M4 9h7v5H4z" fill="#fff"/><path d="M5.500 10h2v4h-2z" fill="#0a50c8"/></svg><span>保存(<u>S</u>)</span></button>
      </div>
    </fieldset>
  </div>

  <footer class="mt-auto ml-px flex gap-[2px] text-center leading-4">
    <div class="h-[18px] w-[167px] border border-[#9c9a9c]">网关端口：8001</div>
    <div class="h-[18px] w-[118px] border border-[#9c9a9c]">已启动→正常运行</div>
    <div class="h-[18px] w-[98px] border border-[#9c9a9c]"></div>
    <div class="h-[18px] w-[148px] border border-[#9c9a9c]">2021/7/14 20:53:21</div>
    <div class="h-[18px] flex-1 border border-[#9c9a9c]">GeeM2微端网关</div>
  </footer>
</section>

<!-- Highlight marks -->
<div class="pointer-events-none absolute left-[61px] top-[402px] h-[35px] w-[117px] rounded-[50%] border-[3px] border-[#ff3a3a]"></div>
<div class="pointer-events-none absolute left-[72px] top-[504px] h-[52px] w-[143px] border-[3px] border-[#ff3a3a]"></div>
<div class="pointer-events-none absolute left-[818px] top-[593px] h-[41px] w-[180px] border-[3px] border-[#ff3a3a]"></div>
<div class="pointer-events-none absolute left-[1102px] top-[278px] h-[32px] w-[103px] rounded-[50%] border-[3px] border-[#ff3a3a]"></div>

<p class="pointer-events-none absolute right-[24px] top-[714px] font-['Noto_Sans_CJK_SC',sans-serif] text-[34px] leading-[48px] text-white [text-shadow:2px_2px_1px_#000]"><b class="mr-3">头条</b><span class="mr-1">@</span>我是<span class="font-['Inter',sans-serif] text-[40px] font-light">FEIYA</span></p>
</body>
</html>
